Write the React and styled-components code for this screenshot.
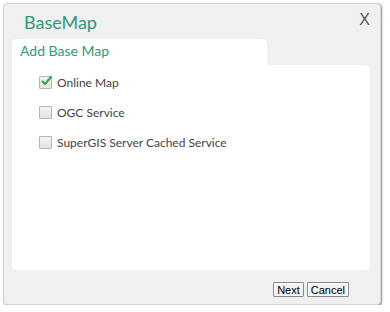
import React from 'react';
import styled, { createGlobalStyle } from 'styled-components';

const Global = createGlobalStyle`
  html, body { margin: 0; padding: 0; background: #fff; }
  body { font-family: Lato, "Open Sans", "Liberation Sans", sans-serif; }
`;

const Dialog = styled.div`
  position: relative;
  margin: 3px 0 0 3px;
  width: 378px;
  height: 302px;
  background: #f0f0f0;
  border: 1px solid #d4d4d4;
  border-radius: 4px;
  box-shadow: 1px 1px 2px rgba(0, 0, 0, 0.45);
  display: flex;
  flex-direction: column;
  box-sizing: border-box;
  padding: 0 10px 0 8px;
`;

const Header = styled.div`
  height: 35px;
  display: flex;
  align-items: center;
  justify-content: space-between;
  padding: 0 0 0 12px;
`;

const Title = styled.div`
  color: #2f9a78;
  font-size: 18px;
`;

const Close = styled.div`
  color: #555;
  font-size: 16px;
  font-family: "Liberation Sans", sans-serif;
  margin-top: -4px;
`;

const Tab = styled.div`
  width: 255px;
  height: 26px;
  background: #fff;
  border-radius: 5px 5px 0 0;
  color: #2f9a78;
  font-size: 14px;
  line-height: 24px;
  padding-left: 8px;
  box-sizing: border-box;
`;

const Panel = styled.div`
  height: 205px;
  background: #fff;
  border-radius: 0 5px 5px 5px;
  padding: 11px 0 0 27px;
  box-sizing: border-box;
  display: flex;
  flex-direction: column;
  gap: 17px;
`;

const Row = styled.label`
  display: flex;
  align-items: center;
  gap: 5px;
  font-size: 12px;
  color: #444;
  height: 13px;
`;

const Box = styled.span`
  position: relative;
  width: 11px;
  height: 11px;
  border: 1px solid #b5b5b5;
  border-radius: 1px;
  background: linear-gradient(#f4f4f4, #e2e2e2);
  flex: none;
`;

const Check = styled.svg`
  position: absolute;
  left: 0;
  top: -2px;
`;

const Footer = styled.div`
  flex: 1;
  display: flex;
  justify-content: flex-end;
  align-items: flex-start;
  gap: 3px;
  padding: 12px 21px 0 0;
`;

const Button = styled.button`
  height: 15px;
  padding: 0 3px;
  font-family: "Liberation Sans", Arial, sans-serif;
  font-size: 11px;
  line-height: 12px;
  color: #000;
  background: #f2f2f2;
  border: 1px solid #8a8a8a;
  border-radius: 1px;
  box-shadow: inset 0 0 0 1px #fff;
`;

const CheckBox = ({ checked }) => (
  <Box>
    {checked && (
      <Check width="13" height="12" viewBox="0 0 13 12">
        <path d="M2.5 6.5 L5 9 L11 2" fill="none" stroke="#3aa84a" strokeWidth="2.2" strokeLinecap="round" strokeLinejoin="round" />
      </Check>
    )}
  </Box>
);

const items = [
  { label: 'Online Map', checked: true },
  { label: 'OGC Service', checked: false },
  { label: 'SuperGIS Server Cached Service', checked: false },
];

export default function App() {
  return (
    <>
      <Global />
      <Dialog>
        <Header>
          <Title>BaseMap</Title>
          <Close>X</Close>
        </Header>
        <Tab>Add Base Map</Tab>
        <Panel>
          {items.map((it) => (
            <Row key={it.label}>
              <CheckBox checked={it.checked} />
              {it.label}
            </Row>
          ))}
        </Panel>
        <Footer>
          <Button>Next</Button>
          <Button>Cancel</Button>
        </Footer>
      </Dialog>
    </>
  );
}
